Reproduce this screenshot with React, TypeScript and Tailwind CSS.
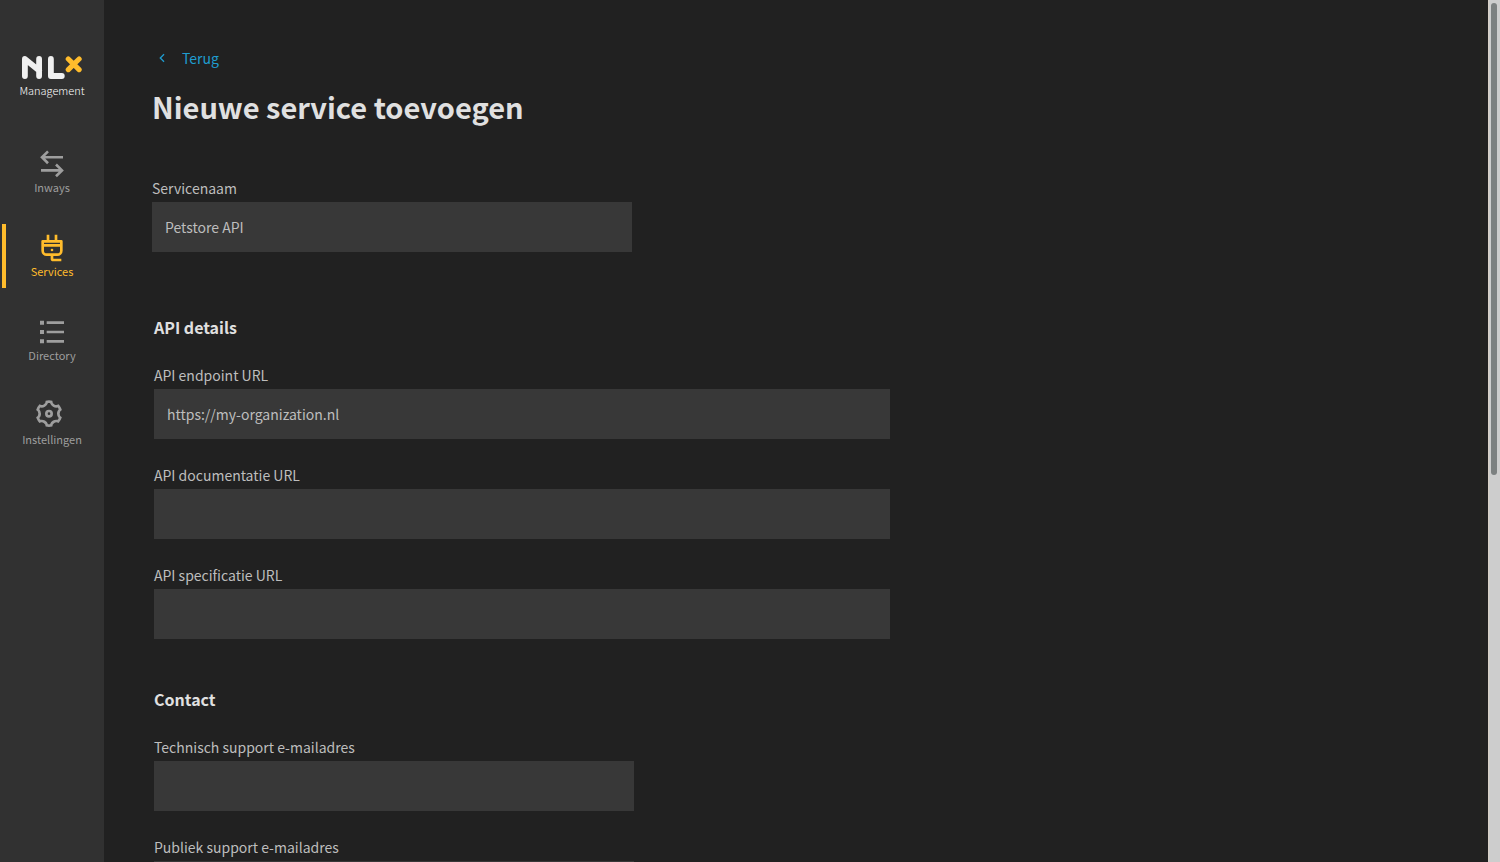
import React from 'react';
import { RiArrowLeftSLine, RiListCheck } from 'react-icons/ri';

function Logo() {
  return (
    <svg viewBox="22 56 60 23" className="h-[23px] w-[60px]" fill="none" strokeLinecap="round" strokeLinejoin="round" aria-hidden="true">
      <path d="M24.9 76V59L39.1 70.5M39.1 59V76" stroke="#f0f0f0" strokeWidth="5.8" />
      <path d="M50.9 59V76H61.8" stroke="#f0f0f0" strokeWidth="5.8" />
      <path d="M68.3 59L79.1 69.6M79.1 59L68.3 69.6" stroke="#ffbc2c" strokeWidth="5.2" />
    </svg>
  );
}

function InwaysIcon() {
  return (
    <svg viewBox="0 0 32 32" className="size-8" fill="none" stroke="currentColor" strokeWidth="2.6" aria-hidden="true">
      <path d="M27 9.3H5.5M12 3.4L6 9.3L12 15.2" />
      <path d="M5 22.4H26.5M20 16.5L26 22.4L20 28.3" />
    </svg>
  );
}

function PlugIcon() {
  return (
    <svg viewBox="0 0 24 24" className="size-8" fill="currentColor" aria-hidden="true">
      <path d="M13 18v2h6v2h-6a2 2 0 0 1-2-2v-2H8a4 4 0 0 1-4-4V7a1 1 0 0 1 1-1h3V2h2v4h4V2h2v4h3a1 1 0 0 1 1 1v7a4 4 0 0 1-4 4h-3zm-5-2h8a2 2 0 0 0 2-2v-3H6v3a2 2 0 0 0 2 2zm10-8H6v1h12V8zm-6 6.5a1 1 0 1 1 0-2 1 1 0 0 1 0 2z" />
    </svg>
  );
}

function GearIcon() {
  return (
    <svg viewBox="2.25 1.75 24 24" className="size-8 overflow-visible" fill="currentColor" aria-hidden="true">
      <path d="M3.34 17a10.018 10.018 0 0 1-.978-2.326 3 3 0 0 0 .002-5.347A9.99 9.99 0 0 1 4.865 4.99a3 3 0 0 0 4.631-2.674 9.99 9.99 0 0 1 5.007.002 3 3 0 0 0 4.632 2.672c.579.59 1.093 1.261 1.525 2.01.433.749.757 1.53.978 2.326a3 3 0 0 0-.002 5.347 9.99 9.99 0 0 1-2.501 4.337 3 3 0 0 0-4.631 2.674 9.99 9.99 0 0 1-5.007-.002 3 3 0 0 0-4.632-2.672A10.018 10.018 0 0 1 3.34 17zm5.66.196a4.993 4.993 0 0 1 2.25 2.77c.499.047 1 .048 1.499.001A4.993 4.993 0 0 1 15 17.197a4.993 4.993 0 0 1 3.525-.565c.29-.408.54-.843.748-1.298A4.993 4.993 0 0 1 18 12c0-1.26.47-2.437 1.273-3.334a8.126 8.126 0 0 0-.75-1.298A4.993 4.993 0 0 1 15 6.804a4.993 4.993 0 0 1-2.25-2.77c-.499-.047-1-.048-1.499-.001A4.993 4.993 0 0 1 9 6.803a4.993 4.993 0 0 1-3.525.565 7.99 7.99 0 0 0-.748 1.298A4.993 4.993 0 0 1 6 12c0 1.26-.47 2.437-1.273 3.334a8.126 8.126 0 0 0 .75 1.298A4.993 4.993 0 0 1 9 17.196zM12 15a3 3 0 1 1 0-6 3 3 0 0 1 0 6zm0-2a1 1 0 1 0 0-2 1 1 0 0 0 0 2z" />
    </svg>
  );
}

type NavItemProps = {
  label: string;
  icon: React.ReactNode;
  active?: boolean;
};

function NavItem({ label, icon, active = false }: NavItemProps) {
  const tone = active
    ? 'border-[#ffbc2c] text-[#ffbc2c]'
    : 'border-transparent text-[#9e9e9e]';
  return (
    <li>
      <a
        href="#"
        aria-current={active ? 'page' : undefined}
        className={`ml-[2px] flex h-16 flex-col items-center border-l-4 pt-2 pr-[6px] ${tone}`}
      >
        {icon}
        <span className="text-[11px] leading-[14px]">{label}</span>
      </a>
    </li>
  );
}

type FieldProps = {
  id: string;
  label: string;
  value?: string;
  wide?: boolean;
};

function Field({ id, label, value = '', wide = false }: FieldProps) {
  return (
    <div className="pt-6">
      <label htmlFor={id} className="mb-[2px] block leading-6 text-[#bdbdbd]">
        {label}
      </label>
      <input
        id={id}
        defaultValue={value}
        className={`block h-[50px] w-full bg-[#383838] px-[13px] text-[#bdbdbd] outline-none ${
          wide ? 'max-w-[736px]' : 'max-w-[480px]'
        }`}
      />
    </div>
  );
}

export default function App() {
  return (
    <div className="flex h-screen bg-[#212121] font-['Noto_Sans_CJK_SC',sans-serif] text-[14px] text-[#e0e0e0]">
      <nav className="w-[104px] shrink-0 bg-[#313131] pt-14">
        <a href="#" className="flex flex-col items-center gap-1 text-white">
          <Logo />
          <span className="text-[11px] leading-[14px] font-light">Management</span>
        </a>
        <ul className="mt-[43px] flex flex-col gap-5">
          <NavItem label="Inways" icon={<InwaysIcon />} />
          <NavItem label="Services" icon={<PlugIcon />} active />
          <NavItem label="Directory" icon={<RiListCheck className="size-8" />} />
          <NavItem label="Instellingen" icon={<GearIcon />} />
        </ul>
      </nav>

      <main className="flex-1 overflow-y-auto px-12 pt-[46px] [scrollbar-width:none]">
        <a href="#" className="flex w-fit items-center gap-3 pl-[2px] leading-6 text-[#1f9ccf]">
          <RiArrowLeftSLine className="size-4" />
          Terug
        </a>
        <h1 className="mt-4 mb-[26px] text-[29px] leading-10 font-bold">Nieuwe service toevoegen</h1>

        <form className="pb-12">
          <Field id="name" label="Servicenaam" value="Petstore API" />

          <fieldset className="mx-[2px] mt-16">
            <legend className="text-base leading-[23px] font-bold">API details</legend>
            <Field id="endpoint" label="API endpoint URL" value="https://my-organization.nl" wide />
            <Field id="documentation" label="API documentatie URL" wide />
            <Field id="specification" label="API specificatie URL" wide />
          </fieldset>

          <fieldset className="mx-[2px] mt-[49px]">
            <legend className="text-base leading-[23px] font-bold">Contact</legend>
            <Field id="tech-support" label="Technisch support e-mailadres" />
            <Field id="public-support" label="Publiek support e-mailadres" />
          </fieldset>
        </form>
      </main>

      <div className="w-3 shrink-0 border-l border-[#d8d0c8] bg-[#cdcdcd] pt-[3px] pl-[2px]" aria-hidden="true">
        <div className="h-[55%] w-[6px] rounded-full bg-[#7c8080]" />
      </div>
    </div>
  );
}
